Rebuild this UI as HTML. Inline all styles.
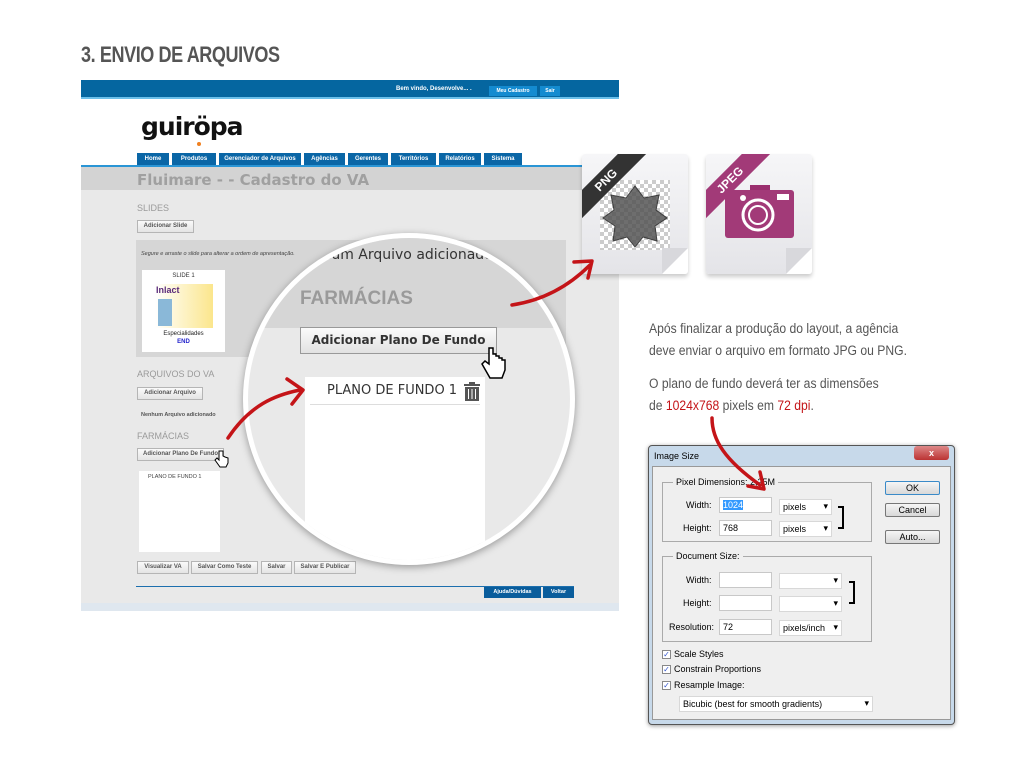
<!DOCTYPE html><html><head><meta charset="utf-8"><style>
*{margin:0;padding:0;box-sizing:border-box}
body{width:1024px;height:768px;background:#fff;position:relative;overflow:hidden;font-family:"Liberation Sans",sans-serif}
.a{position:absolute}
.btn{position:absolute;background:linear-gradient(#fafafa,#e4e4e4);border:1px solid #b5b5b5;font-size:6px;font-weight:bold;color:#555;text-align:center;line-height:11px;height:13px}
.tab{position:absolute;top:153px;height:13px;background:#0a66a6;color:#fff;font-size:6px;font-weight:bold;text-align:center;line-height:13px}
.sec{position:absolute;color:#9a9a9a;font-size:9px}
.dlg{font-size:9px;color:#000;position:absolute}
.in{position:absolute;background:#fff;border:1px solid #c8c8c8;height:16px;font-size:9px;padding:2px 3px}
.sel{position:absolute;background:#fff;border:1px solid #d8d8d8;height:16px;font-size:9px;padding:2px 3px}
.sel:after{content:"▾";position:absolute;right:3px;top:1px;font-size:9px}
.cb{position:absolute;width:9px;height:9px;border:1px solid #888;background:#fff;font-size:8px;line-height:7px;text-align:center;color:#35c}
.dbtn{position:absolute;width:55px;height:14px;border:1px solid #777;border-radius:2px;background:linear-gradient(#f5f5f5,#d8d8d8);font-size:9px;text-align:center;line-height:12px}
.icon{position:absolute;width:106px;height:120px;background:linear-gradient(#f6f6f8,#e4e4e8);border-radius:3px;box-shadow:0 3px 4px rgba(0,0,0,.2);overflow:hidden}
.rib{position:absolute;left:-24px;top:16px;width:96px;height:20px;transform:rotate(-45deg);color:#fff;font-size:12px;font-weight:bold;text-align:center;line-height:20px}
.fold{position:absolute;right:0;bottom:0;width:0;height:0;border-style:solid;border-width:0 0 26px 26px;border-color:transparent transparent #fff #d8d8dc}
</style></head><body>
<div class="a" style="left:81px;top:42px;font-size:22px;font-weight:bold;color:#555;letter-spacing:-0.5px;transform:scaleX(0.82);transform-origin:left">3. ENVIO DE ARQUIVOS</div>

<div class="a" style="left:81px;top:80px;width:538px;height:531px;background:#e9e9e9"></div>
<div class="a" style="left:81px;top:80px;width:538px;height:17px;background:#0566a0"></div>
<div class="a" style="left:81px;top:97px;width:538px;height:2px;background:#6cc0ea"></div>
<div class="a" style="left:396px;top:84px;font-size:6px;font-weight:bold;color:#fff;line-height:10px">Bem vindo, Desenvolve... .</div>
<div class="a" style="left:489px;top:86px;width:48px;height:10px;background:#148bd0;color:#fff;font-size:5px;font-weight:bold;text-align:center;line-height:10px">Meu Cadastro</div>
<div class="a" style="left:540px;top:86px;width:20px;height:10px;background:#148bd0;color:#fff;font-size:5px;font-weight:bold;text-align:center;line-height:10px">Sair</div>
<div class="a" style="left:81px;top:99px;width:538px;height:68px;background:#fff"></div>
<div class="a" style="left:141px;top:112px;font-size:25px;font-weight:bold;color:#111;letter-spacing:-1px;font-family:'DejaVu Sans',sans-serif">guiröpa</div>
<div class="a" style="left:197px;top:142px;width:4px;height:4px;border-radius:2px;background:#f08020"></div>
<div class="tab" style="left:137px;width:32px">Home</div>
<div class="tab" style="left:172px;width:44px">Produtos</div>
<div class="tab" style="left:219px;width:82px">Gerenciador de Arquivos</div>
<div class="tab" style="left:304px;width:41px">Agências</div>
<div class="tab" style="left:348px;width:40px">Gerentes</div>
<div class="tab" style="left:391px;width:45px">Territórios</div>
<div class="tab" style="left:439px;width:42px">Relatórios</div>
<div class="tab" style="left:484px;width:38px">Sistema</div>
<div class="a" style="left:81px;top:165px;width:538px;height:2px;background:#2a95d5"></div>
<div class="a" style="left:81px;top:167px;width:538px;height:23px;background:#d3d3d3"></div>
<div class="a" style="left:137px;top:171px;font-size:15px;font-weight:bold;color:#a0a0a0;font-family:'DejaVu Sans',sans-serif">Fluimare - - Cadastro do VA</div>
<div class="sec" style="left:137px;top:203px">SLIDES</div>
<div class="btn" style="left:137px;top:220px;width:57px">Adicionar Slide</div>
<div class="a" style="left:136px;top:240px;width:430px;height:117px;background:#d6d6d6"></div>
<div class="a" style="left:141px;top:251px;font-size:5.5px;font-style:italic;color:#444">Segure e arraste o slide para alterar a ordem de apresentação.</div>
<div class="a" style="left:142px;top:270px;width:83px;height:82px;background:#fff">
 <div style="font-size:6px;text-align:center;margin-top:3px;color:#333">SLIDE 1</div>
 <div style="position:absolute;left:13px;top:14px;width:58px;height:44px;background:linear-gradient(90deg,#fff,#fbe68c)"></div>
 <div style="position:absolute;left:14px;top:15px;font-size:9px;font-weight:bold;color:#5a2a7a">Inlact</div>
 <div style="position:absolute;left:16px;top:29px;width:14px;height:27px;background:#8ab8d8"></div>
 <div style="position:absolute;left:0;width:83px;top:61px;font-size:6px;text-align:center;color:#222">Especialidades</div>
 <div style="position:absolute;left:0;width:83px;top:69px;font-size:6px;text-align:center;color:#22c;font-weight:bold">END</div>
</div>
<div class="sec" style="left:137px;top:369px">ARQUIVOS DO VA</div>
<div class="btn" style="left:137px;top:387px;width:66px">Adicionar Arquivo</div>
<div class="a" style="left:141px;top:412px;font-size:5.5px;color:#555;font-weight:bold">Nenhum Arquivo adicionado</div>
<div class="sec" style="left:137px;top:431px">FARMÁCIAS</div>
<div class="btn" style="left:137px;top:448px;width:87px">Adicionar Plano De Fundo</div>
<div class="a" style="left:139px;top:471px;width:81px;height:81px;background:#fff"><div style="font-size:5.5px;color:#444;margin:3px 0 0 9px">PLANO DE FUNDO 1</div></div>
<div class="btn" style="left:137px;top:561px;width:52px">Visualizar VA</div>
<div class="btn" style="left:191px;top:561px;width:67px">Salvar Como Teste</div>
<div class="btn" style="left:261px;top:561px;width:31px">Salvar</div>
<div class="btn" style="left:294px;top:561px;width:62px">Salvar E Publicar</div>
<div class="a" style="left:136px;top:586px;width:438px;height:1px;background:#1c6fae"></div>
<div class="a" style="left:484px;top:587px;width:57px;height:11px;background:#0a5d9c;color:#fff;font-size:5.5px;font-weight:bold;text-align:center;line-height:11px">Ajuda/Dúvidas</div>
<div class="a" style="left:543px;top:587px;width:31px;height:11px;background:#0a5d9c;color:#fff;font-size:5.5px;font-weight:bold;text-align:center;line-height:11px">Voltar</div>
<div class="a" style="left:81px;top:603px;width:538px;height:8px;background:#dfe7ef"></div>

<!-- magnifier -->
<div class="a" style="left:243px;top:233px;width:332px;height:332px;border-radius:50%;background:#e9e9e9;border:5px solid #fff;box-shadow:0 2px 8px rgba(0,0,0,.35);overflow:hidden">
 <div class="a" style="left:-10px;top:-5px;width:330px;height:95px;background:#d6d6d6"></div>
 <div class="a" style="left:70px;top:9px;font-size:14px;color:#333;font-family:'DejaVu Sans',sans-serif">.num Arquivo adicionado</div>
 <div class="a" style="left:52px;top:50px;font-size:19px;font-weight:bold;color:#9a9a9a">FARMÁCIAS</div>
 <div class="a" style="left:52px;top:89px;width:197px;height:27px;border:1px solid #999;background:linear-gradient(#fbfbfb,#e2e2e2);font-size:12px;font-weight:bold;color:#333;text-align:center;line-height:25px;font-family:'DejaVu Sans',sans-serif">Adicionar Plano De Fundo</div>
 <div class="a" style="left:57px;top:139px;width:180px;height:200px;background:#fff"></div>
 <div class="a" style="left:79px;top:145px;font-size:13px;color:#333;font-family:'DejaVu Sans',sans-serif">PLANO DE FUNDO 1</div>
 <div class="a" style="left:62px;top:166px;width:170px;height:1px;background:#ddd"></div>
 <svg class="a" style="left:215px;top:144px" width="18" height="20"><rect x="1" y="2" width="16" height="2" fill="#555"/><rect x="6" y="0" width="6" height="2" fill="#555"/><rect x="2" y="5" width="14" height="14" fill="#555"/><g stroke="#fff" stroke-width="1"><line x1="5.5" y1="7" x2="5.5" y2="17"/><line x1="9" y1="7" x2="9" y2="17"/><line x1="12.5" y1="7" x2="12.5" y2="17"/></g></svg>
 <svg class="a" style="left:233px;top:108px" width="30" height="36"><path d="M8 2 v16 l-4-3 -3 3 8 14 h12 l3-8 v-10 h-3 v-2 h-3 v-2 h-3 v-2 h-3 v-6 z" fill="#fff" stroke="#000" stroke-width="1.5"/></svg>
</div>
<svg class="a" style="left:214px;top:450px" width="16" height="20"><path d="M5 1 v9 l-2-2 -2 2 5 7 h6 l2-4 v-5 l-3-1 -2-1 v-5 z" fill="#fff" stroke="#000" stroke-width="1"/></svg>

<!-- file icons -->
<div class="icon" style="left:582px;top:154px">
 <div class="a" style="left:18px;top:26px;width:70px;height:70px;background-color:#fff;background-image:linear-gradient(45deg,#ccc 25%,transparent 25%,transparent 75%,#ccc 75%),linear-gradient(45deg,#ccc 25%,transparent 25%,transparent 75%,#ccc 75%);background-size:8px 8px;background-position:0 0,4px 4px"></div>
 <svg class="a" style="left:18px;top:26px" width="70" height="70"><polygon points="35,6 44,18 59,15 56,30 67,38 55,46 57,61 43,57 35,67 27,57 13,61 15,46 3,38 14,30 11,15 26,18" fill="#555" opacity=".85" stroke="#222"/></svg>
 <div class="rib" style="background:#333">PNG</div>
 <div class="fold"></div>
</div>
<div class="icon" style="left:706px;top:154px">
 <svg class="a" style="left:19px;top:31px" width="70" height="55"><rect x="25" y="0" width="20" height="5" fill="#9a2e6e"/><rect x="0" y="5" width="69" height="48" rx="3" fill="#a23a78"/><circle cx="18" cy="13" r="3" fill="#fff"/><rect x="52" y="9" width="12" height="6" fill="#fff"/><circle cx="33" cy="30" r="15" fill="none" stroke="#fff" stroke-width="3"/><circle cx="33" cy="30" r="9" fill="none" stroke="#fff" stroke-width="2"/></svg>
 <div class="rib" style="background:#a23a78">JPEG</div>
 <div class="fold"></div>
</div>

<div class="a" style="left:649px;top:318px;font-size:13.5px;line-height:22px;color:#555;transform:scaleX(.9);transform-origin:left;white-space:nowrap">Após finalizar a produção do layout, a agência<br>deve enviar o arquivo em formato JPG ou PNG.</div>
<div class="a" style="left:649px;top:373px;font-size:13.5px;line-height:22px;color:#555;transform:scaleX(.9);transform-origin:left;white-space:nowrap">O plano de fundo deverá ter as dimensões<br>de <span style="color:#c41418">1024x768</span> pixels em <span style="color:#c41418">72 dpi</span>.</div>

<!-- dialog -->
<div class="a" style="left:648px;top:445px;width:307px;height:280px;background:#c7d9ea;border:1px solid #555;border-radius:4px;box-shadow:0 1px 4px rgba(0,0,0,.4)"></div>
<div class="a" style="left:652px;top:466px;width:299px;height:254px;background:#efefef;border:1px solid #999"></div>
<div class="dlg" style="left:654px;top:451px">Image Size</div>
<div class="a" style="left:914px;top:446px;width:35px;height:14px;background:linear-gradient(#d88,#b33);border-radius:3px;color:#fff;font-size:9px;text-align:center;line-height:14px;font-weight:bold">x</div>
<div class="a" style="left:662px;top:482px;width:210px;height:60px;border:1px solid #aaa"></div>
<div class="dlg" style="left:673px;top:477px;background:#efefef;padding:0 3px">Pixel Dimensions: 2,25M</div>
<div class="dlg" style="left:686px;top:500px">Width:</div>
<div class="in" style="left:719px;top:497px;width:53px"><span style="background:#39f;color:#fff">1024</span></div>
<div class="sel" style="left:779px;top:499px;width:53px">pixels</div>
<div class="dlg" style="left:683px;top:523px">Height:</div>
<div class="in" style="left:719px;top:520px;width:53px">768</div>
<div class="sel" style="left:779px;top:521px;width:53px">pixels</div>
<div class="a" style="left:838px;top:506px;width:6px;height:23px;border:2px solid #000;border-left:none"></div>
<div class="a" style="left:662px;top:556px;width:210px;height:86px;border:1px solid #aaa"></div>
<div class="dlg" style="left:673px;top:551px;background:#efefef;padding:0 3px">Document Size:</div>
<div class="dlg" style="left:686px;top:575px">Width:</div>
<div class="in" style="left:719px;top:572px;width:53px"></div>
<div class="sel" style="left:779px;top:573px;width:63px"></div>
<div class="dlg" style="left:683px;top:598px">Height:</div>
<div class="in" style="left:719px;top:595px;width:53px"></div>
<div class="sel" style="left:779px;top:596px;width:63px"></div>
<div class="a" style="left:849px;top:581px;width:6px;height:23px;border:2px solid #000;border-left:none"></div>
<div class="dlg" style="left:669px;top:622px">Resolution:</div>
<div class="in" style="left:719px;top:619px;width:53px">72</div>
<div class="sel" style="left:779px;top:620px;width:63px">pixels/inch</div>
<div class="cb" style="left:662px;top:650px">✓</div><div class="dlg" style="left:674px;top:649px">Scale Styles</div>
<div class="cb" style="left:662px;top:665px">✓</div><div class="dlg" style="left:674px;top:664px">Constrain Proportions</div>
<div class="cb" style="left:662px;top:681px">✓</div><div class="dlg" style="left:674px;top:680px">Resample Image:</div>
<div class="sel" style="left:679px;top:696px;width:194px">Bicubic (best for smooth gradients)</div>
<div class="dbtn" style="left:885px;top:481px;border-color:#3a8ac8">OK</div>
<div class="dbtn" style="left:885px;top:503px">Cancel</div>
<div class="dbtn" style="left:885px;top:530px">Auto...</div>

<svg class="a" style="left:0;top:0" width="1024" height="768">
 <g fill="none" stroke="#c41418" stroke-width="3.5" stroke-linecap="round" stroke-linejoin="round">
  <path d="M228 438 C250 405 275 395 300 390"/>
  <path d="M287 379 L303 390 L292 404"/>
  <path d="M512 305 C545 300 570 285 590 265"/>
  <path d="M574 262 L592 261 L588 278"/>
  <path d="M712 418 C712 440 725 460 760 485"/>
  <path d="M748 486 L764 489 L760 472"/>
 </g>
</svg>
</body></html>
